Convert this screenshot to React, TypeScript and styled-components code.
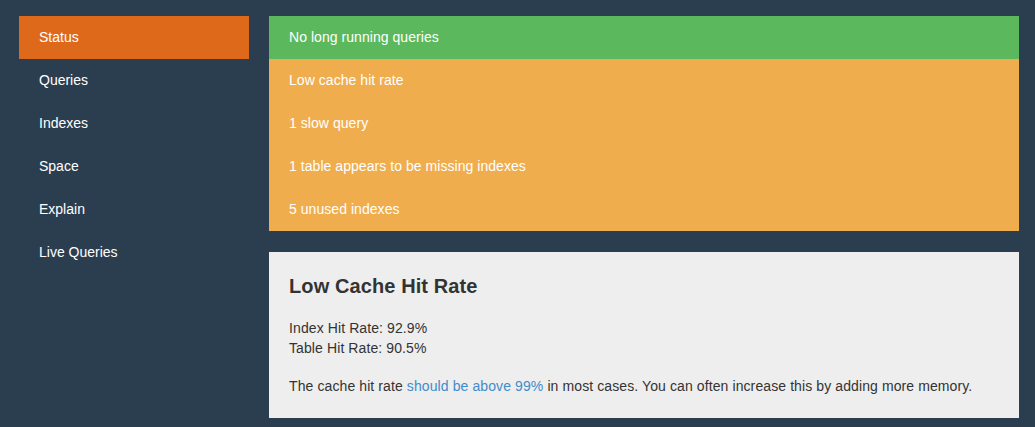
import React from "react";
import styled, { createGlobalStyle } from "styled-components";

const Global = createGlobalStyle`
  html, body { margin: 0; padding: 0; background: #2b3e50; }
  body { font-family: "Liberation Sans", Arial, Helvetica, sans-serif; font-size: 14px; line-height: 20px; color: #333; }
  * { box-sizing: border-box; }
`;

const Page = styled.div`
  display: flex;
  align-items: flex-start;
  gap: 20px;
  padding: 16px 16px 10px 19px;
  min-height: 427px;
  background: #2b3e50;
`;

const Nav = styled.nav`
  width: 230px;
  display: flex;
  flex-direction: column;
  flex-shrink: 0;
`;

const NavItem = styled.a<{ $active?: boolean }>`
  display: flex;
  align-items: center;
  height: 43px;
  padding: 0 20px 1px;
  color: #fff;
  text-decoration: none;
  background: ${(p) => (p.$active ? "#df691a" : "transparent")};
`;

const Main = styled.main`
  width: 750px;
  display: flex;
  flex-direction: column;
  gap: 21px;
`;

const Alerts = styled.div`
  display: flex;
  flex-direction: column;
`;

const Alert = styled.div<{ $kind: "success" | "warning" }>`
  display: flex;
  align-items: center;
  height: 43px;
  padding: 0 20px 1px;
  color: #fff;
  letter-spacing: 0.05px;
  background: ${(p) => (p.$kind === "success" ? "#5cb85c" : "#f0ad4e")};
`;

const Panel = styled.section`
  background: #eeeeee;
  padding: 22px 20px 22px 20px;
  color: #333;
  letter-spacing: 0.1px;
`;

const Title = styled.h1`
  margin: 0 0 20px;
  font-size: 20px;
  line-height: 24px;
  font-weight: bold;
  color: #333;
`;

const Para = styled.p<{ $gap?: number }>`
  margin: 0;
  margin-top: ${(p) => (p.$gap ? `${p.$gap}px` : "0")};
`;

const Link = styled.a`
  color: #428bca;
  text-decoration: none;
`;

const navItems = ["Status", "Queries", "Indexes", "Space", "Explain", "Live Queries"];

export default function App() {
  return (
    <>
      <Global />
      <Page>
        <Nav>
          {navItems.map((n, i) => (
            <NavItem key={n} $active={i === 0} href="#">
              {n}
            </NavItem>
          ))}
        </Nav>
        <Main>
          <Alerts>
            <Alert $kind="success">No long running queries</Alert>
            <Alert $kind="warning">Low cache hit rate</Alert>
            <Alert $kind="warning">1 slow query</Alert>
            <Alert $kind="warning">1 table appears to be missing indexes</Alert>
            <Alert $kind="warning">5 unused indexes</Alert>
          </Alerts>
          <Panel>
            <Title>Low Cache Hit Rate</Title>
            <Para>
              Index Hit Rate: 92.9%
              <br />
              Table Hit Rate: 90.5%
            </Para>
            <Para $gap={18}>
              The cache hit rate <Link href="#">should be above 99%</Link> in most cases. You can often increase this by adding more memory.
            </Para>
          </Panel>
        </Main>
      </Page>
    </>
  );
}
